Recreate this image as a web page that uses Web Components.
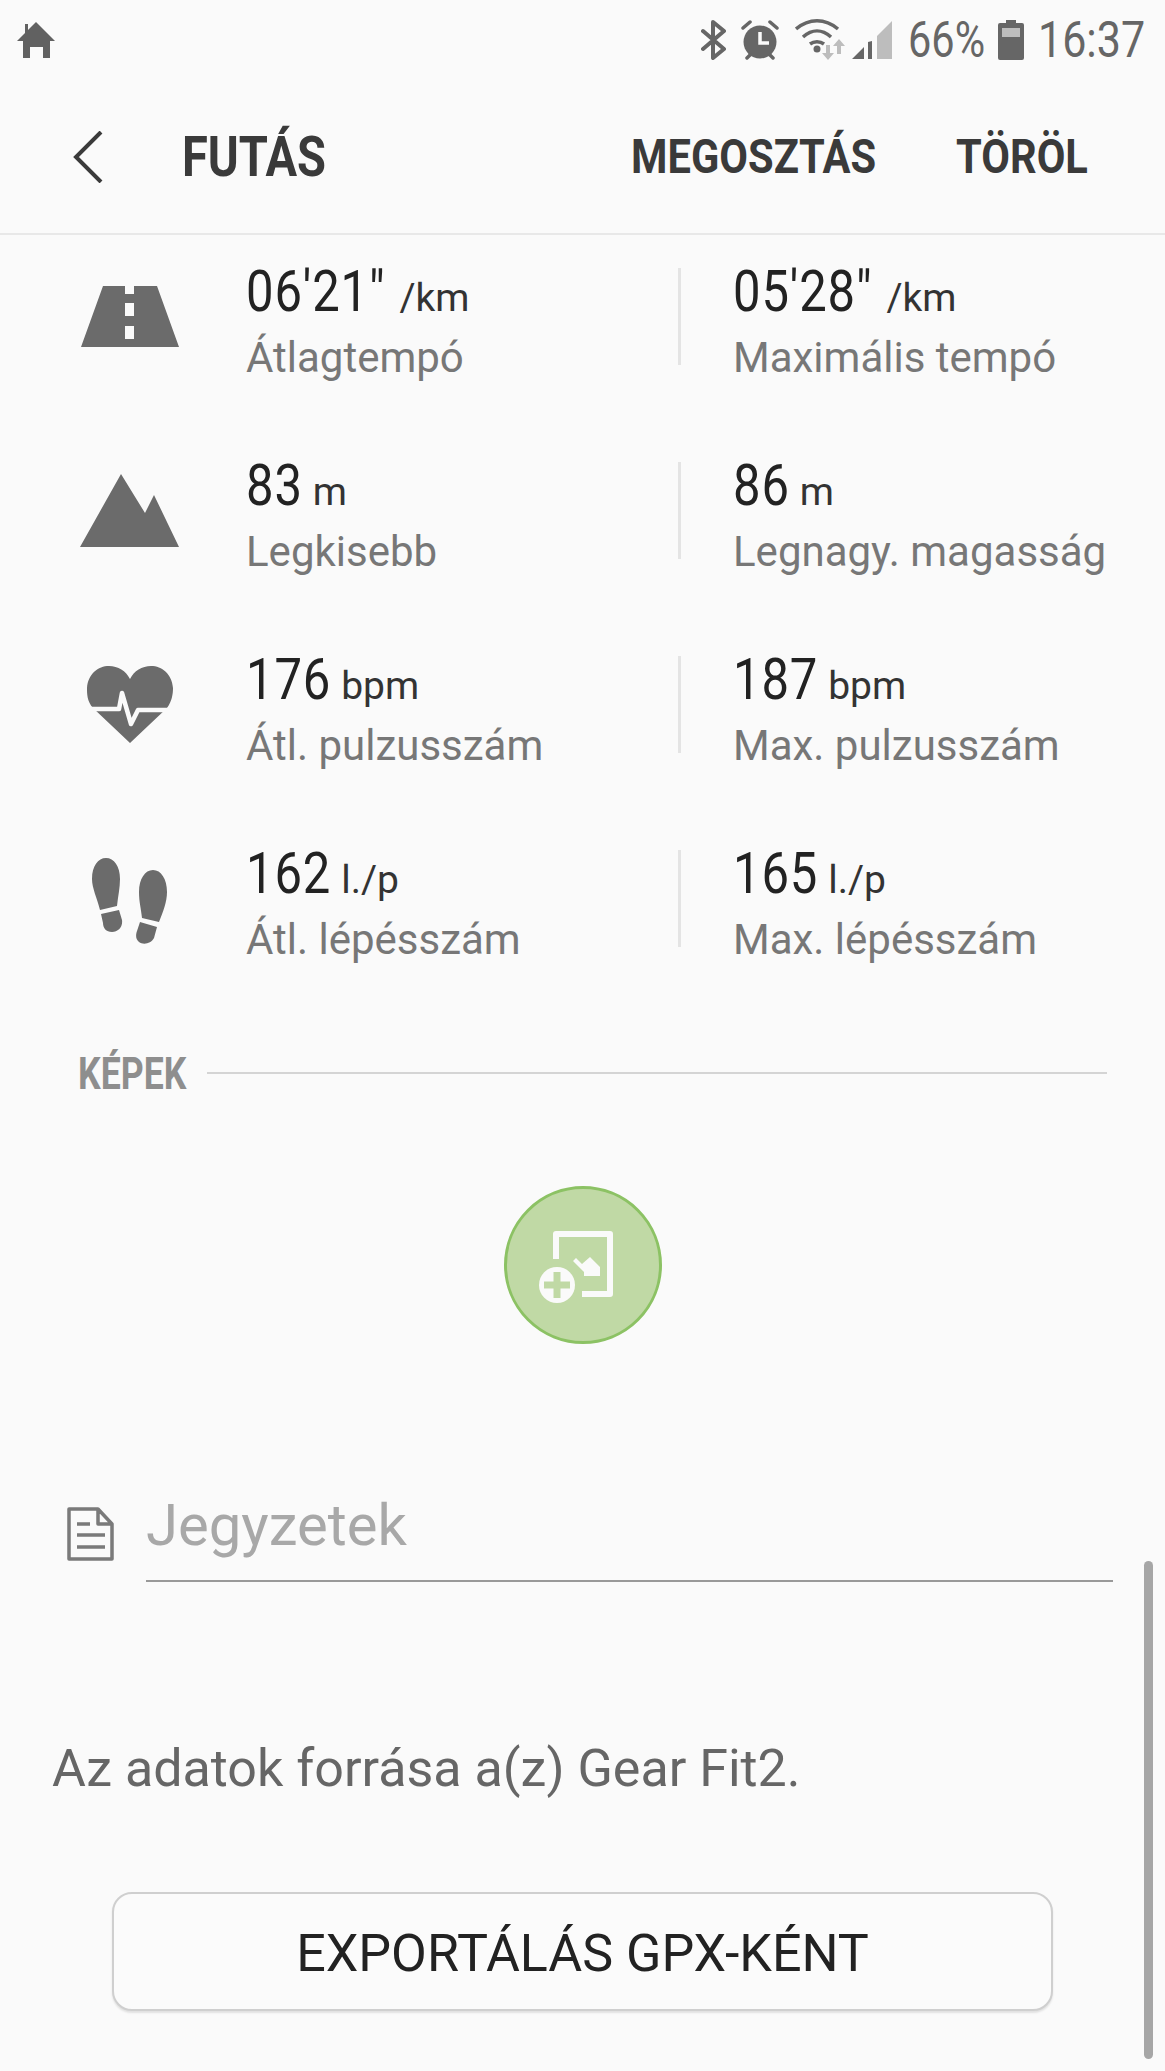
<!DOCTYPE html>
<html lang="hu">
<head>
<meta charset="utf-8">
<title>Futás</title>
<style>
    html, body { margin: 0; padding: 0; }
    body {
        width: 1165px;
        height: 2071px;
        overflow: hidden;
        background: #fafafa;
        font-family: Roboto, "Liberation Sans", sans-serif;
        position: relative;
    }
</style>
</head>
<body>
<status-bar></status-bar>
<app-bar title="FUTÁS"></app-bar>
<stat-list>
    <stat-row value-a="06'21&quot;" unit-a="&#8202;/km" label-a="Átlagtempó" value-b="05'28&quot;" unit-b="&#8202;/km" label-b="Maximális tempó">
        <svg slot="icon" width="100" height="62" viewBox="0 0 100 62"><path fill="#6b6b6b" d="M23 0H45V8H54V0H77L99 61H1ZM45 17V30H54V17ZM45 40V53H54V40Z" fill-rule="evenodd"/></svg>
    </stat-row>
    <stat-row value-a="83" unit-a="m" label-a="Legkisebb" value-b="86" unit-b="m" label-b="Legnagy. magasság">
        <svg slot="icon" width="100" height="74" viewBox="0 0 100 74"><path fill="#6b6b6b" d="M41 0L65 39L74 21L99 73H0Z"/></svg>
    </stat-row>
    <stat-row value-a="176" unit-a="bpm" label-a="Átl. pulzusszám" value-b="187" unit-b="bpm" label-b="Max. pulzusszám">
        <svg slot="icon" width="88" height="78" viewBox="0 0 88 78"><path fill="#6b6b6b" d="M44 77L7 42C1 35 1 28 1 22C2 8 12 0 23 0C32 0 40 5 44 13C48 5 56 0 65 0C76 0 86 8 87 22C87 28 86 35 81 42Z"/><path fill="none" stroke="#fafafa" stroke-width="4.5" stroke-linejoin="round" d="M2 43H33L36 27L45 58L52 44H86"/></svg>
    </stat-row>
    <stat-row value-a="162" unit-a="l./p" label-a="Átl. lépésszám" value-b="165" unit-b="l./p" label-b="Max. lépésszám">
        <svg slot="icon" width="76" height="86" viewBox="0 0 76 86" style="margin-top:4px"><path fill="#6b6b6b" d="M8 52C5 40 0 30 0 21C0 8 6 0 14 0C22 0 28 8 28 21C28 30 26 38 25 48ZM9 56L27 52L30 62C31 69 26 74 20 74C14 74 11 70 11 65ZM50 60C49 50 47 44 47 34C47 21 53 12 61 12C69 12 75 21 75 34C75 44 71 54 67 64ZM48 64L65 69L62 80C59 86 51 87 47 84C43 81 44 76 45 73Z"/></svg>
    </stat-row>
</stat-list>
<section-title label="KÉPEK"></section-title>
<add-photo></add-photo>
<notes-field placeholder="Jegyzetek"></notes-field>
<source-note>Az adatok forrása a(z) Gear Fit2.</source-note>
<export-button>EXPORTÁLÁS GPX-KÉNT</export-button>
<scroll-thumb></scroll-thumb>

<script>
// Samsung's condensed face is not installed, so narrow Roboto with a transform.
// --sx is the x scale; the negative margin takes back the space the transform leaves.
const CONDENSED = `
    .cond {
        display: inline-block;
        transform: scaleX(var(--sx));
        transform-origin: 0 50%;
        white-space: nowrap;
    }
`;

// Set the box of a condensed span to its scaled width, so flow stays correct.
function fitCondensed(root) {
    root.querySelectorAll(".cond").forEach(el => {
        const sx = parseFloat(getComputedStyle(el).getPropertyValue("--sx"));
        const w = el.getBoundingClientRect().width;
        el.style.marginRight = (w - w / sx) + "px";
    });
}

class StatusBar extends HTMLElement {
    constructor() {
        super();
        this.attachShadow({ mode: "open" }).innerHTML = `
            <style>
                :host {
                    display: flex;
                    align-items: center;
                    height: 80px;
                    padding: 0 20px 0 17px;
                    box-sizing: border-box;
                    color: #666;
                    font-size: 50px;
                    --sx: 0.86;
                }
                ${CONDENSED}
                .home { margin-right: auto; }
                svg { display: block; flex: none; }
                .cond { line-height: 80px; }
            </style>
            <svg class="home" width="38" height="36" viewBox="0 0 38 36"><path fill="#616161" d="M0 19L8 11V2H11V8L19 0L38 19H33V36H26V25H13V36H6V19Z"/></svg>
            <svg width="26" height="40" viewBox="0 0 26 40" style="margin-right:14px"><path fill="none" stroke="#666" stroke-width="4" stroke-linejoin="round" stroke-linecap="round" d="M2 11L23 29L12 38V2L23 11L2 29"/></svg>
            <svg width="38" height="40" viewBox="0 0 38 40" style="margin-right:16px"><circle cx="19" cy="22" r="16.5" fill="#666"/><path fill="none" stroke="#666" stroke-width="3.5" stroke-linecap="round" d="M2 8L9 2M36 8L29 2M6 38L9 35M32 38L29 35"/><path fill="none" stroke="#fafafa" stroke-width="3.5" d="M19 12V23H28"/></svg>
            <svg width="52" height="42" viewBox="0 0 52 42" style="margin-right:5px"><path fill="none" stroke="#666" stroke-width="3.5" d="M1 10C14 -1 30 -1 43 10M8 18C17 10 27 10 36 18M15 25C19 22 25 22 29 25"/><circle cx="22" cy="30" r="3.5" fill="#666"/><path fill="#bdbdbd" d="M31 26H35V34H39L33 41L27 34H31ZM42 35V27H38L44 20L50 27H46V35Z"/></svg>
            <svg width="40" height="38" viewBox="0 0 40 38" style="margin-right:16px"><path fill="#666" d="M0 38L12 26V38ZM16 21L20 20V38H16Z"/><path fill="#bdbdbd" d="M25 15L40 0V38H25Z"/></svg>
            <span class="cond" style="--sx:.83">66%</span>
            <svg width="26" height="40" viewBox="0 0 26 40" style="margin:0 14px 0 13px"><path fill="#666" d="M8 0H18V3H24Q26 3 26 5V38Q26 40 24 40H2Q0 40 0 38V5Q0 3 2 3H8Z"/><rect x="4" y="8" width="18" height="9" fill="#bdbdbd"/></svg>
            <span class="cond">16:37</span>
        `;
    }
    connectedCallback() { fitCondensed(this.shadowRoot); }
}

class AppBar extends HTMLElement {
    connectedCallback() {
        const title = this.getAttribute("title") || "";
        this.attachShadow({ mode: "open" }).innerHTML = `
            <style>
                :host {
                    display: flex;
                    align-items: center;
                    height: 155px;
                    box-sizing: border-box;
                    padding: 0 77px 0 73px;
                    border-bottom: 2px solid #e8e8e8;
                    color: #3a3a3a;
                    font-weight: 700;
                }
                ${CONDENSED}
                svg { display: block; flex: none; margin-right: 79px; }
                .title { font-size: 56px; --sx: 0.84; }
                .action { font-size: 49px; --sx: 0.85; }
                .spacer { flex: 1; }
                .gap { width: 80px; }
            </style>
            <svg width="30" height="52" viewBox="0 0 30 52"><path fill="none" stroke="#3a3a3a" stroke-width="4" d="M28 1L3 26L28 51"/></svg>
            <span class="cond title">${title}</span>
            <span class="spacer"></span>
            <span class="cond action">MEGOSZTÁS</span>
            <span class="gap"></span>
            <span class="cond action">TÖRÖL</span>
        `;
        fitCondensed(this.shadowRoot);
    }
}

class StatList extends HTMLElement {
    constructor() {
        super();
        this.attachShadow({ mode: "open" }).innerHTML = `
            <style>
                :host { display: flex; flex-direction: column; gap: 97px; padding-top: 33px; }
            </style>
            <slot></slot>
        `;
    }
}

class StatRow extends HTMLElement {
    connectedCallback() {
        const a = n => this.getAttribute(n) || "";
        this.attachShadow({ mode: "open" }).innerHTML = `
            <style>
                :host {
                    display: grid;
                    grid-template-columns: 246px 432px 55px 1fr;
                    height: 97px;
                    --sx: 0.845;
                }
                ${CONDENSED}
                .icon { display: flex; justify-content: center; align-items: center; padding-left: 24px; height: 97px; width: 235px; box-sizing: border-box; }
                .icon ::slotted(svg) { display: block; }
                .sep { width: 3px; background: #e4e4e4; height: 97px; }
                .cell { min-width: 0; }
                .value { display: block; height: 58px; margin-top: -6px; line-height: 58px; color: #222; font-size: 58px; letter-spacing: 1px; white-space: nowrap; }
                .unit { font-size: 39px; letter-spacing: 0; color: #333; margin-left: 10px; }
                .label { display: block; margin-top: 16px; line-height: 44px; color: #777; font-size: 42px; white-space: nowrap; }
            </style>
            <div class="icon"><slot name="icon"></slot></div>
            <div class="cell">
                <span class="value"><span class="cond">${a("value-a")}</span><span class="unit">${a("unit-a")}</span></span>
                <span class="label">${a("label-a")}</span>
            </div>
            <div class="sep"></div>
            <div class="cell">
                <span class="value"><span class="cond">${a("value-b")}</span><span class="unit">${a("unit-b")}</span></span>
                <span class="label">${a("label-b")}</span>
            </div>
        `;
        fitCondensed(this.shadowRoot);
    }
}

class SectionTitle extends HTMLElement {
    connectedCallback() {
        this.attachShadow({ mode: "open" }).innerHTML = `
            <style>
                :host {
                    display: flex;
                    align-items: center;
                    margin: 105px 58px 0 78px;
                    height: 44px;
                    color: #8e8e8e;
                    font-weight: 700;
                    font-size: 44px;
                    --sx: 0.81;
                }
                ${CONDENSED}
                .line { flex: 1; height: 2px; background: #d4d4d4; margin-left: 21px; margin-top: -3px; }
            </style>
            <span class="cond">${this.getAttribute("label") || ""}</span>
            <span class="line"></span>
        `;
        fitCondensed(this.shadowRoot);
    }
}

class AddPhoto extends HTMLElement {
    constructor() {
        super();
        this.attachShadow({ mode: "open" }).innerHTML = `
            <style>
                :host { display: flex; justify-content: center; margin-top: 90px; }
                .circle {
                    width: 158px;
                    height: 158px;
                    box-sizing: border-box;
                    border-radius: 50%;
                    background: #c0d9a5;
                    border: 3.5px solid #8cc264;
                    display: flex;
                    align-items: center;
                    justify-content: center;
                }
                svg { display: block; overflow: visible; }
            </style>
            <div class="circle">
                <svg width="80" height="72" viewBox="0 0 80 72">
                    <path fill="none" stroke="#fafafa" stroke-width="6" stroke-linejoin="round" d="M13 30V5H67V65H39"/>
                    <path fill="#fafafa" d="M30 32L33 29L39 35L47 28L57 38V47H41V43Z"/>
                    <circle cx="14" cy="56" r="18" fill="#fafafa"/>
                    <path fill="none" stroke="#c0d9a5" stroke-width="7" d="M14 43V69M1 56H27"/>
                </svg>
            </div>
        `;
    }
}

class NotesField extends HTMLElement {
    connectedCallback() {
        this.attachShadow({ mode: "open" }).innerHTML = `
            <style>
                :host {
                    display: flex;
                    margin: 145px 52px 0 67px;
                }
                svg { display: block; flex: none; margin: 18px 32px 0 0; }
                .field {
                    flex: 1;
                    height: 93px;
                    box-sizing: border-box;
                    border-bottom: 2px solid #999;
                    color: #a8a8a8;
                    font-size: 58px;
                    line-height: 73px;
                }
            </style>
            <svg width="47" height="54" viewBox="0 0 47 54"><path fill="none" stroke="#7a7a7a" stroke-width="3.5" stroke-linejoin="round" d="M3 2H31L45 17V52H2V2ZM31 2V17H45"/><path fill="none" stroke="#7a7a7a" stroke-width="3.5" d="M10 17H23M10 28H38M10 40H38"/></svg>
            <div class="field">${this.getAttribute("placeholder") || ""}</div>
        `;
    }
}

class SourceNote extends HTMLElement {
    constructor() {
        super();
        this.attachShadow({ mode: "open" }).innerHTML = `
            <style>
                :host {
                    display: block;
                    margin: 157px 0 0 52px;
                    color: #666;
                    font-size: 52px;
                    line-height: 60px;
                }
            </style>
            <slot></slot>
        `;
    }
}

class ExportButton extends HTMLElement {
    constructor() {
        super();
        this.attachShadow({ mode: "open" }).innerHTML = `
            <style>
                :host {
                    display: flex;
                    align-items: center;
                    justify-content: center;
                    box-sizing: border-box;
                    width: 941px;
                    height: 119px;
                    padding-top: 3px;
                    margin: 93px 0 0 112px;
                    background: #fbfbfb;
                    border: 2px solid #cfcfcf;
                    border-radius: 20px;
                    box-shadow: 0 2px 2px rgba(0, 0, 0, 0.1);
                    color: #222;
                    font-size: 52px;
                }
            </style>
            <slot></slot>
        `;
    }
}

class ScrollThumb extends HTMLElement {
    constructor() {
        super();
        this.attachShadow({ mode: "open" }).innerHTML = `
            <style>
                :host {
                    position: absolute;
                    left: 1144px;
                    top: 1561px;
                    width: 9px;
                    height: 498px;
                    background: #a6a6a6;
                    border-radius: 5px;
                }
            </style>
        `;
    }
}

customElements.define("status-bar", StatusBar);
customElements.define("app-bar", AppBar);
customElements.define("stat-list", StatList);
customElements.define("stat-row", StatRow);
customElements.define("section-title", SectionTitle);
customElements.define("add-photo", AddPhoto);
customElements.define("notes-field", NotesField);
customElements.define("source-note", SourceNote);
customElements.define("export-button", ExportButton);
customElements.define("scroll-thumb", ScrollThumb);
</script>
</body>
</html>
